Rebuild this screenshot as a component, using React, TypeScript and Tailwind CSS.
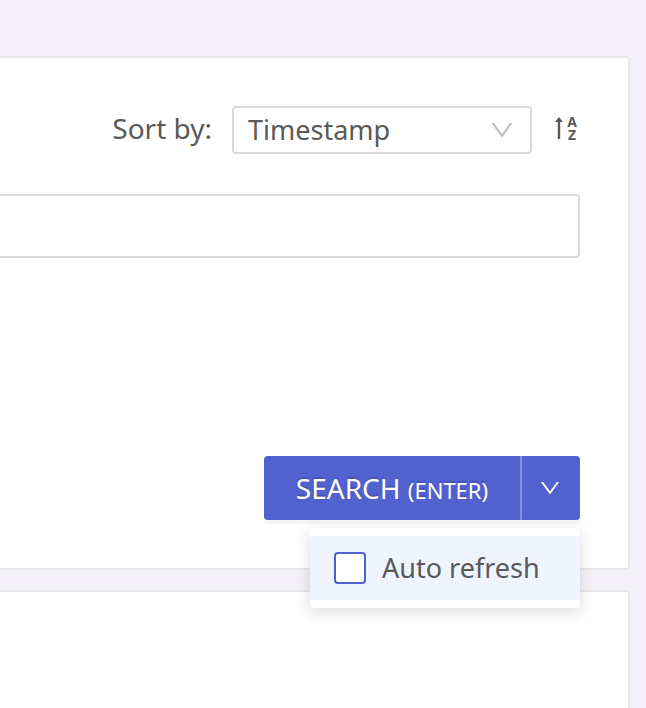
import { useState } from 'react'
import { AiOutlineDown } from 'react-icons/ai'

function SortOrderIcon() {
  return (
    <span className="flex items-center gap-1" aria-hidden="true">
      <svg width="8" height="24" viewBox="0 0 8 24" fill="currentColor">
        <path d="M4 1 8 6H5.2V23H2.8V6H0Z" />
      </svg>
      <span className="w-2.5 text-center text-sm leading-[13px] font-bold">A Z</span>
    </span>
  )
}

function SortBar() {
  return (
    <div className="flex items-center justify-end">
      <label htmlFor="sort" className="mr-5 pb-1 text-[28px] leading-10">
        Sort by:
      </label>
      <div className="relative mr-5 w-[300px]">
        <select
          id="sort"
          className="block h-12 w-full appearance-none rounded-sm border-2 border-[#d9d9d9] bg-white px-3.5 text-[27px] leading-10 outline-none"
        >
          <option>Timestamp</option>
          <option>Relevance</option>
        </select>
        <AiOutlineDown className="pointer-events-none absolute top-2.5 right-4 size-7 text-[#bfbfbf]" />
      </div>
      <button type="button" aria-label="Sort order" className="flex w-7 justify-center pb-1">
        <SortOrderIcon />
      </button>
    </div>
  )
}

function SearchActions() {
  const [autoRefresh, setAutoRefresh] = useState(false)

  return (
    <div className="relative flex justify-end">
      <button
        type="button"
        className="h-16 w-64 rounded-l-sm bg-[#5161ce] text-[28px] text-white shadow-[0_4px_0_rgba(0,0,0,0.045)] [text-shadow:0_-2px_0_rgba(0,0,0,0.12)]"
      >
        SEARCH <span className="text-[22px]">(ENTER)</span>
      </button>
      <button
        type="button"
        aria-label="More options"
        className="flex h-16 w-15 items-center justify-center rounded-r-sm border-l-2 border-[#8390e0] bg-[#5161ce] pr-0.5 text-white shadow-[0_4px_0_rgba(0,0,0,0.045)]"
      >
        <AiOutlineDown className="size-6" />
      </button>
      <div className="absolute top-full right-0 mt-2 w-[270px] rounded-sm bg-white py-2 shadow-[0_4px_16px_rgba(0,0,0,0.15)]">
        <label className="flex h-16 items-center gap-4 bg-[#f0f4ff] px-6 text-[27px]">
          <input
            type="checkbox"
            checked={autoRefresh}
            onChange={(e) => setAutoRefresh(e.target.checked)}
            className="size-8 shrink-0 appearance-none rounded-sm border-2 border-[#5161ce] bg-white checked:bg-[#5161ce]"
          />
          <span className="whitespace-nowrap">Auto refresh</span>
        </label>
      </div>
    </div>
  )
}

export default function App() {
  return (
    <main className="flex min-h-screen flex-col gap-5 overflow-hidden bg-[#f4f2f8] pt-14 pr-4 font-['Noto_Sans',sans-serif] text-[#595959]">
      <section className="rounded-r-sm border-2 border-l-0 border-[#e8e8e8] bg-white py-12 pr-12">
        <SortBar />
        <input
          type="text"
          aria-label="Query"
          className="mt-10 mb-[198px] block h-16 w-full rounded-r-sm border-2 border-l-0 border-[#d9d9d9] bg-white px-4 text-[28px] outline-none"
        />
        <SearchActions />
      </section>
      <section className="grow rounded-tr-sm border-t-2 border-r-2 border-[#e8e8e8] bg-white" />
    </main>
  )
}
